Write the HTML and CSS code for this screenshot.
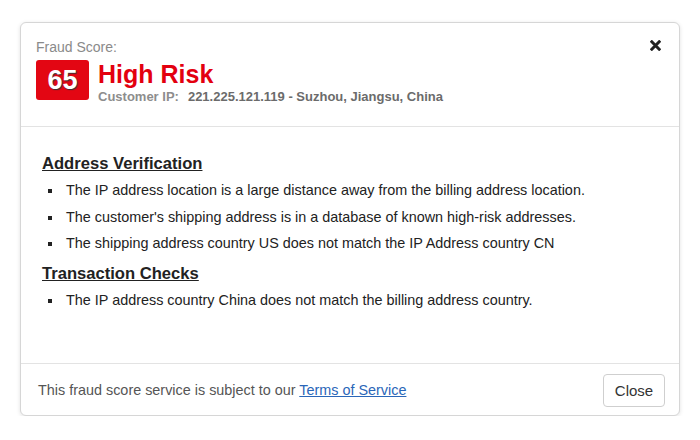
FILE: index.html
```html
<!DOCTYPE html>
<html>
<head>
<meta charset="utf-8">
<link rel="stylesheet" href="styles.css">
</head>
<body>
<div class="modal">
  <div class="modal-header">
    <div class="score-label">Fraud Score:</div>
    <div class="score-row">
      <div class="badge">65</div>
      <div class="score-info">
        <div class="risk">High Risk</div>
        <div class="ip"><span class="ip-label">Customer IP:</span><span class="ip-value">221.225.121.119 - Suzhou, Jiangsu, China</span></div>
      </div>
    </div>
    <button class="close-x" aria-label="Close">
      <svg width="11" height="11" viewBox="0 0 11 11"><path d="M1.8 1.8 L9.2 9.2 M9.2 1.8 L1.8 9.2" stroke="#222" stroke-width="3" stroke-linecap="square"/></svg>
    </button>
  </div>
  <div class="modal-body">
    <h3 class="section-title">Address Verification</h3>
    <ul class="checks">
      <li>The IP address location is a large distance away from the billing address location.</li>
      <li>The customer's shipping address is in a database of known high-risk addresses.</li>
      <li>The shipping address country US does not match the IP Address country CN</li>
    </ul>
    <h3 class="section-title">Transaction Checks</h3>
    <ul class="checks">
      <li>The IP address country China does not match the billing address country.</li>
    </ul>
  </div>
  <div class="modal-footer">
    <div class="terms">This fraud score service is subject to our <a href="#">Terms of Service</a></div>
    <button class="btn">Close</button>
  </div>
</div>
</body>
</html>
```
FILE: styles.css
```css
* { box-sizing: border-box; }
html, body { margin: 0; padding: 0; background: #fff; }
body {
  font-family: "Liberation Sans", Arial, Helvetica, sans-serif;
  padding: 22px 20px 0 20px;
}
.modal {
  width: 660px;
  height: 394px;
  border: 1px solid #d6d6d6;
  border-radius: 6px;
  box-shadow: 0 1px 4px rgba(0,0,0,0.12);
  background: #fff;
  display: flex;
  flex-direction: column;
}
.modal-header {
  position: relative;
  height: 104px;
  border-bottom: 1px solid #e3e3e3;
  padding: 16px 0 0 15px;
}
.score-label {
  color: #8a8a8a;
  font-size: 14px;
  line-height: 16px;
}
.score-row {
  display: flex;
  margin-top: 5px;
}
.badge {
  width: 53px;
  height: 40px;
  background: #e30613;
  border-radius: 3px;
  color: #fff;
  font-weight: bold;
  font-size: 27px;
  line-height: 40px;
  text-align: center;
  text-shadow: 1px 1px 1px #333;
}
.score-info {
  margin-left: 9px;
}
.risk {
  color: #e3000f;
  font-weight: bold;
  font-size: 25px;
  line-height: 26px;
  margin-top: 1px;
}
.ip {
  font-size: 13px;
  font-weight: bold;
  line-height: 14px;
  margin-top: 3px;
}
.ip-label { color: #8d8d8d; margin-right: 9px; }
.ip-value { color: #6b6b6b; }
.close-x {
  position: absolute;
  top: 17px;
  right: 18px;
  border: 0;
  background: none;
  padding: 0;
  width: 11px;
  height: 11px;
  cursor: pointer;
}
.close-x svg { display: block; }
.modal-body {
  flex: 1;
  padding: 27px 0 0 21px;
  border-bottom: 1px solid #e3e3e3;
}
.section-title {
  margin: 0;
  font-size: 16.6px;
  line-height: 20px;
  font-weight: bold;
  color: #222;
  text-decoration: underline;
}
.checks {
  list-style: none;
  margin: 8px 0 12px 0;
  padding: 0 0 0 24px;
}
.checks li {
  position: relative;
  font-size: 14.4px;
  line-height: 17px;
  color: #222;
  margin-bottom: 9.5px;
}
.checks li::before {
  content: "";
  position: absolute;
  left: -18px;
  top: 7px;
  width: 4px;
  height: 4px;
  background: #222;
}
.modal-footer {
  height: 51px;
  display: flex;
  align-items: center;
  justify-content: space-between;
  padding: 0 14px 0 17px;
}
.terms {
  font-size: 14.4px;
  color: #555;
}
.terms a { color: #2a66b8; text-decoration: underline; }
.btn {
  font-family: "Liberation Sans", Arial, sans-serif;
  font-size: 15px;
  color: #333;
  background: #fff;
  border: 1px solid #cfcfcf;
  border-radius: 4px;
  width: 62px;
  height: 33px;
  padding: 0;
  margin-top: 1px;
}
```
